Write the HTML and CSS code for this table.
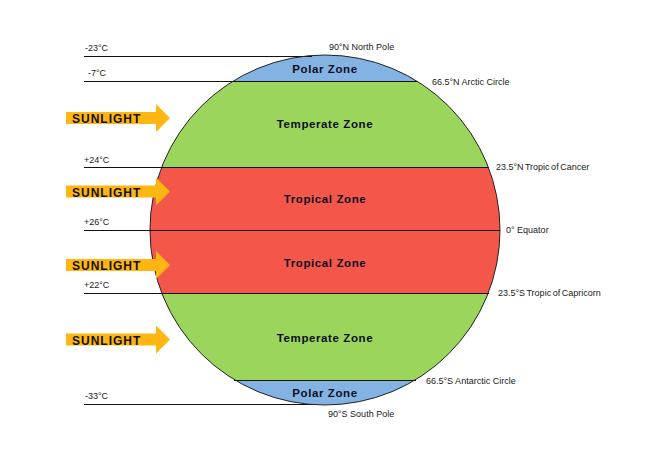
FILE: index.html
```html
<!DOCTYPE html>
<html lang="en">
<head>
<meta charset="utf-8">
<title>Climate Zones</title>
<link rel="stylesheet" href="styles.css">
</head>
<body>
<svg class="diagram" width="650" height="460" viewBox="0 0 650 460" xmlns="http://www.w3.org/2000/svg">
  <defs>
    <clipPath id="globe">
      <circle cx="325" cy="230" r="175"/>
    </clipPath>
  </defs>

  <g clip-path="url(#globe)">
    <rect class="polar" x="140" y="40" width="380" height="41"/>
    <rect class="temperate" x="140" y="81" width="380" height="86"/>
    <rect class="tropical" x="140" y="167" width="380" height="126"/>
    <rect class="temperate" x="140" y="293" width="380" height="87"/>
    <rect class="polar" x="140" y="380" width="380" height="40"/>
  </g>

  <line class="rule" x1="84" y1="56.5" x2="312" y2="56.5"/>
  <line class="rule" x1="84" y1="81.5" x2="417" y2="81.5"/>
  <line class="rule" x1="84" y1="167.5" x2="489" y2="167.5"/>
  <line class="rule" x1="84" y1="230.5" x2="500" y2="230.5"/>
  <line class="rule" x1="84" y1="293.5" x2="489" y2="293.5"/>
  <line class="rule" x1="234" y1="380.5" x2="416" y2="380.5"/>
  <line class="rule" x1="84" y1="404.5" x2="312" y2="404.5"/>

  <circle class="outline" cx="325" cy="230" r="175"/>

  <text class="zone" x="325" y="73">Polar Zone</text>
  <text class="zone" x="325" y="128">Temperate Zone</text>
  <text class="zone" x="325" y="203">Tropical Zone</text>
  <text class="zone" x="325" y="266.5">Tropical Zone</text>
  <text class="zone" x="325" y="341.5">Temperate Zone</text>
  <text class="zone" x="325" y="397">Polar Zone</text>

  <text class="temp" x="85" y="50.5">-23°C</text>
  <text class="temp" x="88" y="76">-7°C</text>
  <text class="temp" x="84" y="162.5">+24°C</text>
  <text class="temp" x="84" y="225">+26°C</text>
  <text class="temp" x="84" y="288">+22°C</text>
  <text class="temp" x="85" y="399">-33°C</text>

  <text class="lat" x="329" y="49.5">90°N North Pole</text>
  <text class="lat" x="432" y="85">66.5°N Arctic Circle</text>
  <text class="lat tight" x="496" y="169.5">23.5°N Tropic of Cancer</text>
  <text class="lat" x="506" y="233">0° Equator</text>
  <text class="lat tight" x="498" y="296">23.5°S Tropic of Capricorn</text>
  <text class="lat" x="426" y="383.5">66.5°S Antarctic Circle</text>
  <text class="lat" x="328" y="416.5">90°S South Pole</text>

  <g class="sun" transform="translate(0,118)">
    <polygon class="arrow" points="66,-6 156,-6 156,-14 170,0 156,14 156,6 66,6"/>
    <text class="sun-text" x="72" y="5">SUNLIGHT</text>
  </g>
  <g class="sun" transform="translate(0,191.5)">
    <polygon class="arrow" points="66,-6 156,-6 156,-14 170,0 156,14 156,6 66,6"/>
    <text class="sun-text" x="72" y="5">SUNLIGHT</text>
  </g>
  <g class="sun" transform="translate(0,265)">
    <polygon class="arrow" points="66,-6 156,-6 156,-14 170,0 156,14 156,6 66,6"/>
    <text class="sun-text" x="72" y="5">SUNLIGHT</text>
  </g>
  <g class="sun" transform="translate(0,339.5)">
    <polygon class="arrow" points="66,-6 156,-6 156,-14 170,0 156,14 156,6 66,6"/>
    <text class="sun-text" x="72" y="5">SUNLIGHT</text>
  </g>
</svg>
</body>
</html>
```

FILE: styles.css
```css
html, body {
  margin: 0;
  padding: 0;
  background: #ffffff;
}

.diagram {
  display: block;
  font-family: "Liberation Sans", Arial, sans-serif;
}

.polar { fill: #83b3e3; }
.temperate { fill: #9bd55b; }
.tropical { fill: #f4574a; }

.rule {
  stroke: #111111;
  stroke-width: 1;
}

.outline {
  fill: none;
  stroke: #222222;
  stroke-width: 1;
}

.zone {
  font-size: 11.5px;
  font-weight: bold;
  letter-spacing: 0.6px;
  fill: #0d0d1f;
  text-anchor: middle;
}

.temp, .lat {
  font-size: 9px;
  fill: #1a1a1a;
  letter-spacing: 0;
}

.tight {
  word-spacing: -1px;
}

.arrow {
  fill: #ffb612;
}

.sun-text {
  font-size: 12px;
  font-weight: bold;
  letter-spacing: 1px;
  fill: #111111;
}
```
